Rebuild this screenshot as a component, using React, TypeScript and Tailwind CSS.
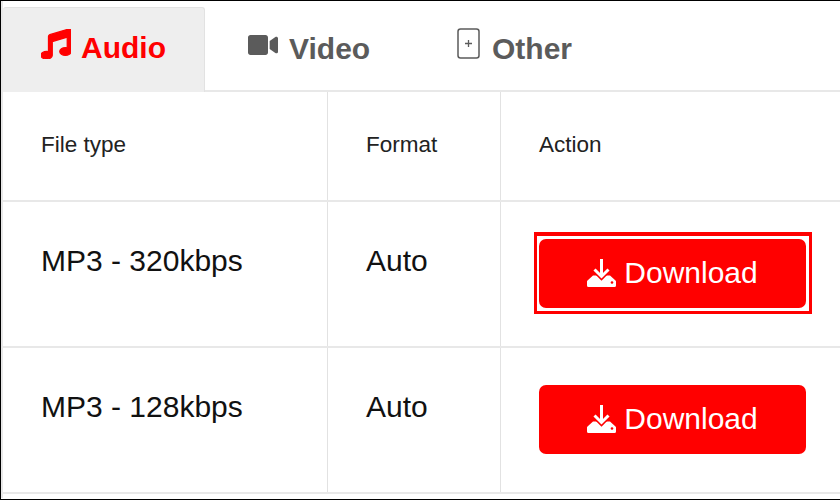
import { FaMusic, FaVideo } from "react-icons/fa";

const rows = [
  { label: "MP3 - 320kbps", focused: true },
  { label: "MP3 - 128kbps", focused: false },
];

const DownloadIcon = () => (
  <svg width="29" height="28" viewBox="0 0 29 28" className="shrink-0 -mt-[2px]">
    <path
      d="M6 16.500h17l5.500 5a1.500 1.500 0 0 1 .500 1.100v3.900a1.500 1.500 0 0 1-1.500 1.500H1.500A1.500 1.500 0 0 1 0 26.500v-3.900a1.500 1.500 0 0 1 .500-1.100z"
      fill="white"
    />
    <path d="M7 10l7.500 7.500L22 10" fill="none" stroke="#ff0000" strokeWidth="6" />
    <path d="M14.500 0v17M7.500 10.500l7 7 7-7" fill="none" stroke="white" strokeWidth="3" />
    <circle cx="25" cy="23.500" r="1.300" fill="#ff0000" />
  </svg>
);

const DownloadButton = () => (
  <button className="w-[267px] h-[69px] bg-[#ff0000] rounded-[7px] flex items-center justify-center gap-[8px] text-white text-[30px]">
    <DownloadIcon />
    <span className="-mt-[2px]">Download</span>
  </button>
);

export default function App() {
  return (
    <div className="w-[840px] h-[500px] bg-white border border-black border-r-0 font-['Liberation_Sans',sans-serif] overflow-hidden">
      <div className="h-[497px] border-l-2 border-[#e8e8e8] flex flex-col">
        {/* Tabs */}
        <div className="h-[91px] shrink-0 flex items-end border-b-2 border-[#e8e8e8]">
          <div className="w-[202px] h-[85px] -mb-[2px] bg-[#eeeeee] border-r border-t border-[#e2e2e2] rounded-t-[3px] flex items-center pl-[38px] pb-[5px] gap-[10px] text-[#ff0000]">
            <FaMusic size={30} stroke="currentColor" strokeWidth={22} className="-mt-[8px]" />
            <span className="text-[30px] font-bold">Audio</span>
          </div>
          <div className="w-[215px] h-[85px] -mb-[2px] flex items-center pl-[43px] pb-[3px] gap-[11px] text-[#5b5b5b]">
            <FaVideo size={30} className="-mt-[6px]" />
            <span className="text-[30px] font-bold">Video</span>
          </div>
          <div className="h-[85px] -mb-[2px] flex items-center pl-[37px] pb-[3px] gap-[11px] text-[#5b5b5b]">
            <svg width="24" height="32" viewBox="0 0 24 32" fill="none" stroke="currentColor" className="-mt-[9px]">
              <rect x="1" y="1" width="21" height="29" rx="2.500" strokeWidth="1.500" />
              <path d="M11.500 12v7M8 15.500h7" strokeWidth="1.300" />
            </svg>
            <span className="text-[30px] font-bold">Other</span>
          </div>
        </div>

        {/* Header row */}
        <div className="h-[110px] shrink-0 grid grid-cols-[325px_173px_1fr] border-b-2 border-[#e8e8e8] text-[22.500px] text-[#222222]">
          <div className="flex items-center pl-[38px] pb-[2px] border-r border-[#e2e2e2]">File type</div>
          <div className="flex items-center pl-[38px] pb-[2px] border-r border-[#e2e2e2]">Format</div>
          <div className="flex items-center pl-[38px] pb-[2px]">Action</div>
        </div>

        {/* Rows */}
        {rows.map((row) => (
          <div
            key={row.label}
            className="h-[146px] shrink-0 grid grid-cols-[325px_173px_1fr] border-b-2 border-[#e8e8e8] text-[30px] text-[#111111]"
          >
            <div className="pl-[38px] pt-[36px] border-r border-[#e2e2e2]">{row.label}</div>
            <div className="pl-[38px] pt-[36px] border-r border-[#e2e2e2]">Auto</div>
            <div className="pl-[38px] pt-[37px]">
              {row.focused ? (
                <div className="w-fit -ml-[5px] -mt-[7px] border-[3px] border-t-4 border-[#ff0000] pl-[2px] pr-[3px] pt-[3px] pb-[3px]">
                  <DownloadButton />
                </div>
              ) : (
                <DownloadButton />
              )}
            </div>
          </div>
        ))}
      </div>
    </div>
  );
}
